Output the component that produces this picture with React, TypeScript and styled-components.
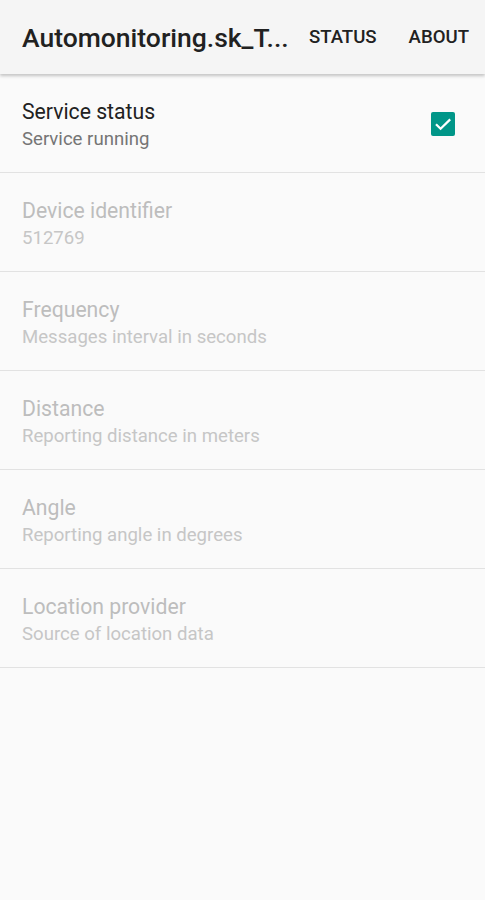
import styled, { createGlobalStyle } from 'styled-components';

const GlobalStyle = createGlobalStyle`
  body {
    margin: 0;
    background: #fafafa;
    font-family: Roboto, "Noto Sans", sans-serif;
  }
`;

const prefs = [
  { title: 'Device identifier', summary: '512769' },
  { title: 'Frequency', summary: 'Messages interval in seconds' },
  { title: 'Distance', summary: 'Reporting distance in meters' },
  { title: 'Angle', summary: 'Reporting angle in degrees' },
  { title: 'Location provider', summary: 'Source of location data' },
];

export default function App() {
  return (
    <>
      <GlobalStyle />
      <Screen>
        <Toolbar>
          <Title>Automonitoring.sk_T...</Title>
          <Actions>
            <Action>STATUS</Action>
            <Action>ABOUT</Action>
          </Actions>
        </Toolbar>
        <List>
          <Row>
            <Texts>
              <RowTitle>Service status</RowTitle>
              <RowSummary>Service running</RowSummary>
            </Texts>
            <CheckBox>
              <svg width="24" height="24" viewBox="0 0 24 24">
                <path
                  d="M5 12.2l4.6 4.6L19.2 7.4"
                  fill="none"
                  stroke="#fff"
                  strokeWidth="2.2"
                />
              </svg>
            </CheckBox>
          </Row>
          {prefs.map((p) => (
            <Row key={p.title}>
              <Texts>
                <RowTitle $disabled>{p.title}</RowTitle>
                <RowSummary $disabled>{p.summary}</RowSummary>
              </Texts>
            </Row>
          ))}
        </List>
      </Screen>
    </>
  );
}

const Screen = styled.div`
  min-height: 900px;
  background: #fafafa;
`;

const Toolbar = styled.header`
  height: 74px;
  display: flex;
  align-items: center;
  padding: 0 16px 0 22px;
  background: #f5f5f5;
  box-shadow: 0 2px 3px rgba(0, 0, 0, 0.22);
  position: relative;
  box-sizing: border-box;
`;

const Title = styled.h1`
  flex: 1;
  min-width: 0;
  margin: 0;
  font-size: 26.5px;
  font-weight: 500;
  color: #212121;
  white-space: nowrap;
  overflow: hidden;
`;

const Actions = styled.div`
  display: flex;
  gap: 32px;
  margin-left: 16px;
  flex-shrink: 0;
`;

const Action = styled.span`
  font-size: 18.6px;
  font-weight: 500;
  color: #212121;
`;

const List = styled.div`
  display: flex;
  flex-direction: column;
`;

const Row = styled.div`
  height: 99px;
  display: flex;
  align-items: center;
  padding: 2px 30px 0 22px;
  border-bottom: 1.5px solid #e2e2e2;
  box-sizing: border-box;
`;

const Texts = styled.div`
  flex: 1;
  display: flex;
  flex-direction: column;
  gap: 4px;
`;

const RowTitle = styled.div<{ $disabled?: boolean }>`
  font-size: 21.2px;
  color: ${(p) => (p.$disabled ? '#bdbdbd' : '#212121')};
`;

const RowSummary = styled.div<{ $disabled?: boolean }>`
  font-size: 18.6px;
  color: ${(p) => (p.$disabled ? '#c6c6c6' : '#757575')};
`;

const CheckBox = styled.div`
  width: 24px;
  height: 24px;
  border-radius: 2px;
  background: #009688;
  display: flex;
  align-items: center;
  justify-content: center;
`;
